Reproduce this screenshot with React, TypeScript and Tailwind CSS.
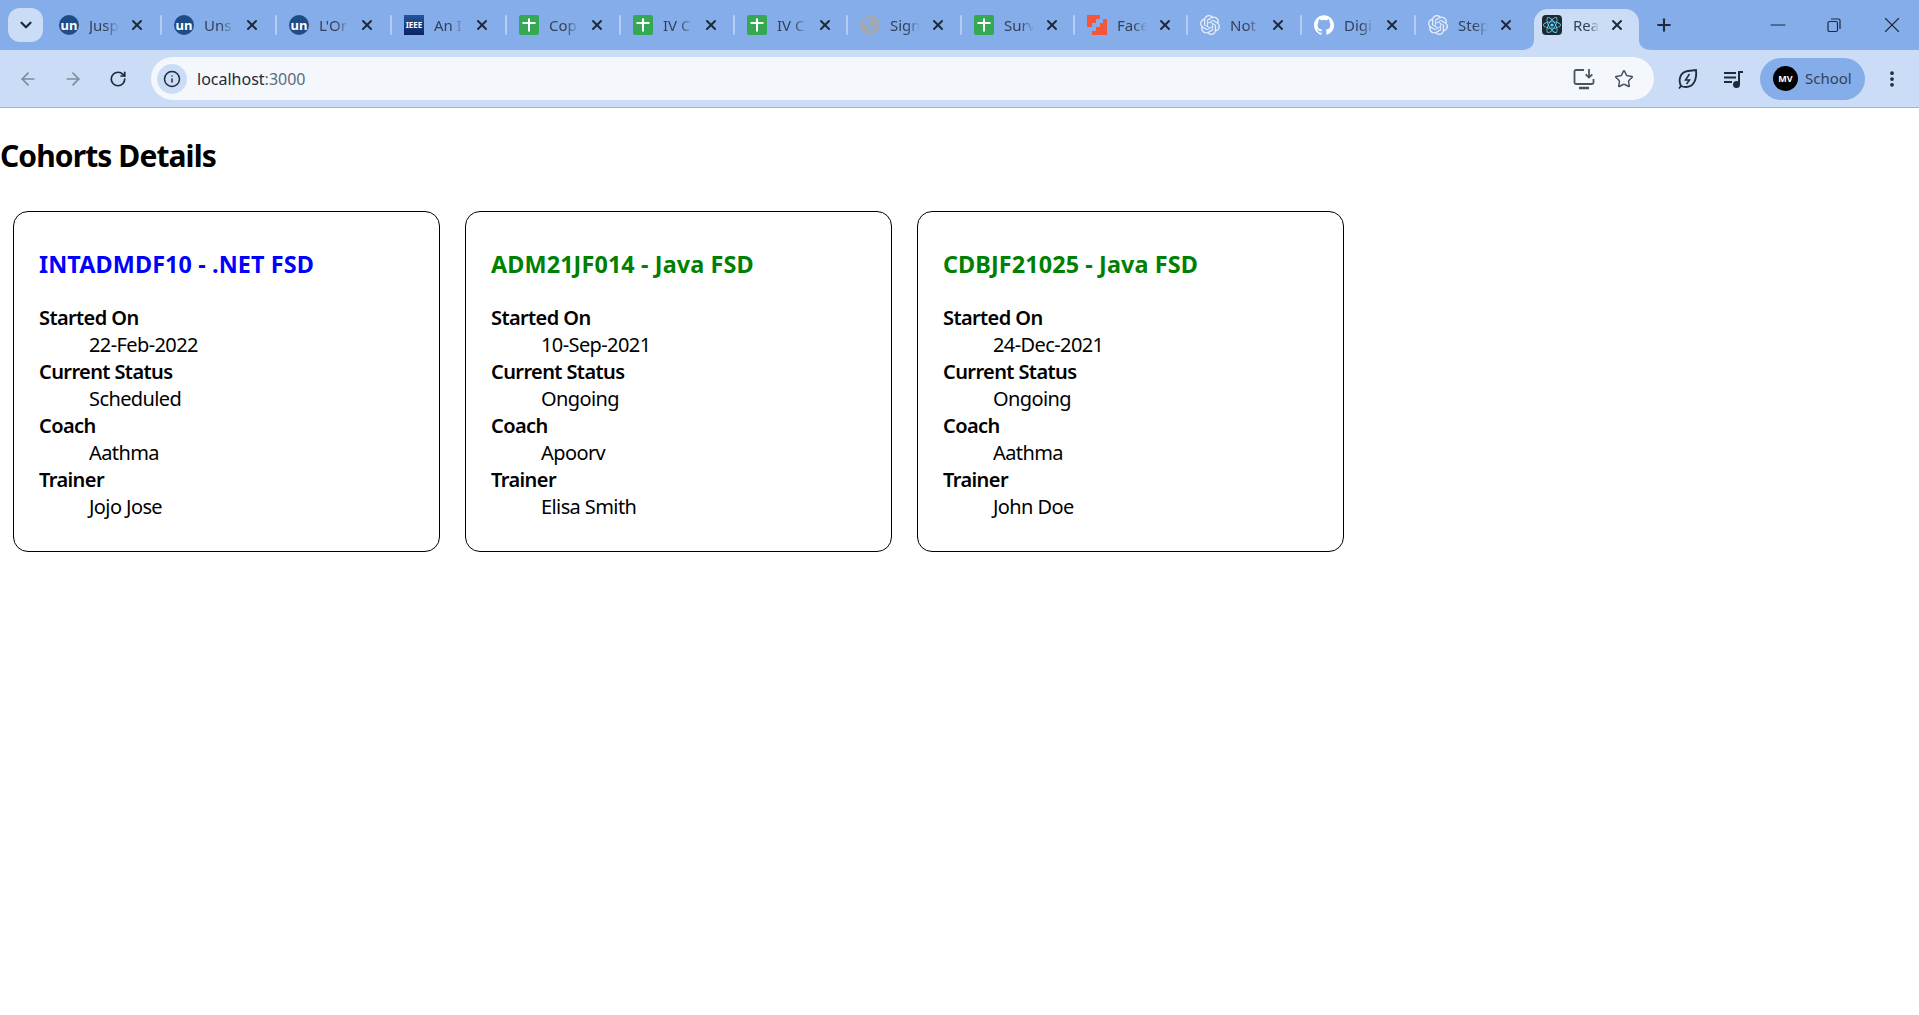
import { SiOpenai, SiGithub } from "react-icons/si";
import { FaGlobeAmericas, FaReact } from "react-icons/fa";
import {
  ArrowLeft,
  ArrowRight,
  ChevronDown,
  Info,
  Minus,
  MoreVertical,
  Plus,
  RotateCw,
  Star,
  X,
} from "lucide-react";
import type { ReactNode } from "react";

const UI_FONT = "font-['Noto_Sans','Open_Sans',sans-serif]";

function UnIcon() {
  return (
    <span className="flex h-5 w-5 items-center justify-center rounded-full bg-[#1d4c86] text-[13px] font-bold leading-none text-white">
      un
    </span>
  );
}

function SheetIcon() {
  return (
    <svg viewBox="0 0 20 20" className="h-5 w-5">
      <rect width="20" height="20" rx="2" fill="#34a853" />
      <path d="M3.5 8h13M10 3.5v13" stroke="#fff" strokeWidth="2" />
    </svg>
  );
}

function IeeeIcon() {
  return (
    <span className="flex h-5 w-5 items-center justify-center bg-gradient-to-b from-[#24569b] to-[#0b2260] text-[8px] font-bold leading-none text-white">
      IEEE
    </span>
  );
}

function StairsIcon() {
  return (
    <svg viewBox="0 0 20 20" className="h-5 w-5">
      <path d="M0 0h13v4H9v4H5v4H0z" fill="#f4553b" />
      <path d="M20 4v16H5v-4h4v-4h4V8h3V4z" fill="#f4553b" />
    </svg>
  );
}

type Tab = { title: string; icon: ReactNode; width: string };

// tab widths are not quite even in the reference
const TABS: Tab[] = [
  { title: "Jusp", icon: <UnIcon />, width: "w-[115px]" },
  { title: "Uns", icon: <UnIcon />, width: "w-[115px]" },
  { title: "L'Or", icon: <UnIcon />, width: "w-[115px]" },
  { title: "An I", icon: <IeeeIcon />, width: "w-[115px]" },
  { title: "Cop", icon: <SheetIcon />, width: "w-[114px]" },
  { title: "IV C", icon: <SheetIcon />, width: "w-[114px]" },
  { title: "IV C", icon: <SheetIcon />, width: "w-[113px]" },
  { title: "Sign", icon: <FaGlobeAmericas size={20} className="text-[#a3a8af]" />, width: "w-[114px]" },
  { title: "Surv", icon: <SheetIcon />, width: "w-[113px]" },
  { title: "Face", icon: <StairsIcon />, width: "w-[113px]" },
  { title: "Not", icon: <SiOpenai size={20} className="text-[#e8eef8]" />, width: "w-[114px]" },
  { title: "Digi", icon: <SiGithub size={20} className="text-white" />, width: "w-[114px]" },
  { title: "Step", icon: <SiOpenai size={20} className="text-[#e8eef8]" />, width: "w-[113px]" },
];

const COHORTS = [
  { code: "INTADMDF10 - .NET FSD", started: "22-Feb-2022", status: "Scheduled", coach: "Aathma", trainer: "Jojo Jose" },
  { code: "ADM21JF014 - Java FSD", started: "10-Sep-2021", status: "Ongoing", coach: "Apoorv", trainer: "Elisa Smith" },
  { code: "CDBJF21025 - Java FSD", started: "24-Dec-2021", status: "Ongoing", coach: "Aathma", trainer: "John Doe" },
];

function BrowserTab({ tab, last }: { tab: Tab; last: boolean }) {
  return (
    <div className={`flex h-full shrink-0 items-center pl-[12px] ${tab.width}`}>
      <span className="flex w-5 shrink-0 justify-center">{tab.icon}</span>
      <span className="ml-[10px] w-[30px] overflow-hidden whitespace-nowrap text-[15px] text-[#33415a] [mask-image:linear-gradient(to_right,#000_55%,transparent)]">
        {tab.title}
      </span>
      <X size={16} strokeWidth={3} className="ml-[10px] shrink-0 text-[#1f2a3a]" />
      {!last && <span className="ml-auto h-[20px] w-[2px] shrink-0 rounded bg-[#b5cdf0]" />}
    </div>
  );
}

function Browser() {
  return (
    <header className={UI_FONT}>
      <div className="flex h-[50px] items-end bg-[#85ade9]">
        <div className="flex h-full w-[47px] shrink-0 items-start pl-2 pt-2">
          <div className="flex h-[34px] w-[35px] items-center justify-center rounded-xl bg-[#cbddf6]">
            <ChevronDown size={18} strokeWidth={3} className="text-[#1f2a3a]" />
          </div>
        </div>
        <div className="mt-2 flex h-[34px] self-start">
          {TABS.map((tab, i) => (
            <BrowserTab key={i} tab={tab} last={i === TABS.length - 1} />
          ))}
        </div>
        <div className="relative ml-[5px] flex h-[41px] w-[105px] shrink-0 items-center rounded-t-[14px] bg-[#cbddf6] pb-[9px] pl-[8px] pr-[14px]">
          <svg viewBox="0 0 13 10" className="absolute bottom-0 left-[-13px] h-[10px] w-[13px]">
            <path d="M13 0v10H0c7 0 13-3 13-10Z" fill="#cbddf6" />
          </svg>
          <svg viewBox="0 0 13 10" className="absolute bottom-0 right-[-13px] h-[10px] w-[13px]">
            <path d="M0 0v10h13C6 10 0 7 0 0Z" fill="#cbddf6" />
          </svg>
          <span className="flex h-5 w-5 shrink-0 items-center justify-center rounded-sm bg-[#1f2a30]">
            <FaReact size={18} className="text-[#61dafb]" />
          </span>
          <span className="ml-[11px] w-[26px] overflow-hidden whitespace-nowrap text-[15px] text-[#33415a] [mask-image:linear-gradient(to_right,#000_60%,transparent)]">
            React
          </span>
          <X size={16} strokeWidth={3} className="ml-auto text-[#1f2a3a]" />
        </div>
        <div className="flex h-[41px] w-[50px] items-center justify-center pb-[9px]">
          <Plus size={20} strokeWidth={2.5} className="text-[#1f2a3a]" />
        </div>
        <div className="ml-auto flex h-full items-center pr-[14px] text-[#1f2a3a]">
          <Minus size={24} strokeWidth={1.1} className="mr-[36px]" />
          <svg viewBox="0 0 16 16" className="mr-[37px] h-4 w-4" fill="none" stroke="currentColor" strokeWidth="1.2">
            <rect x="2" y="4.5" width="9.5" height="10" rx="1.5" />
            <path d="M5 2h7.5A1.5 1.5 0 0 1 14 3.5V12" />
          </svg>
          <X size={26} strokeWidth={1} />
        </div>
      </div>
      <div className="flex h-[58px] items-center border-b border-[#a0b2cf] bg-[#cbddf6] pr-[17px]">
        <ArrowLeft size={20} className="ml-[18px] text-[#7f8b9c]" />
        <ArrowRight size={20} className="ml-[25px] text-[#7f8b9c]" />
        <RotateCw size={18} strokeWidth={2.25} className="ml-[26px] text-[#1f2a3a]" />
        <div className="ml-[24px] flex h-[43px] flex-1 items-center rounded-full bg-[#f4f7fc] pl-[6px] pr-[20px]">
          <span className="flex h-[30px] w-[30px] items-center justify-center rounded-full bg-[#cbddf6]">
            <Info size={18} className="text-[#1f2a3a]" />
          </span>
          <span className="ml-[10px] text-[16px] text-[#1f2a3a]">
            localhost<span className="text-[#5e6a7c]">:3000</span>
          </span>
          <svg viewBox="0 0 22 22" className="ml-auto h-[22px] w-[22px] text-[#4a5361]" fill="none" stroke="currentColor" strokeWidth="1.8">
            <path d="M11 2H3a1.5 1.5 0 0 0-1.5 1.5v11A1.5 1.5 0 0 0 3 16h16a1.5 1.5 0 0 0 1.5-1.5V11" />
            <path d="M6 20h10" strokeWidth="2.5" />
            <path d="M16 1v8M12.7 6.3 16 9.6l3.3-3.3" />
          </svg>
          <Star size={20} strokeWidth={1.75} className="ml-[19px] text-[#4a5361]" />
        </div>
        <svg viewBox="0 0 22 22" className="ml-[23px] h-[22px] w-[22px] text-[#1f2a3a]" fill="none" stroke="currentColor" strokeWidth="1.8">
          <path d="M4 18C1 12 3 4 11 3l8-1c1 9-2 17-10 17-2 0-4-.5-5-1Zm0 0-2 2.5" />
          <path d="m12.5 6-4 6h4l-3 4" strokeWidth="1.5" />
        </svg>
        <svg viewBox="0 0 22 22" className="ml-[24px] h-[22px] w-[22px] text-[#1f2a3a]" fill="none" stroke="currentColor" strokeWidth="2">
          <path d="M1 5h12M1 9.5h12M1 14h8" />
          <path d="M16 16V4h4" />
          <circle cx="13.5" cy="16.5" r="2.5" fill="currentColor" />
        </svg>
        <div className="ml-[15px] flex h-[42px] w-[105px] items-center rounded-full bg-[#85ade9] pl-[13px]">
          <span className="flex h-[25px] w-[25px] items-center justify-center rounded-full bg-black text-[9px] font-bold text-white">
            MV
          </span>
          <span className="ml-[7px] text-[15px] text-[#33415a]">School</span>
        </div>
        <MoreVertical size={20} strokeWidth={2.5} className="ml-[17px] text-[#1f2a3a]" />
      </div>
    </header>
  );
}

function Cohort({ code, started, status, coach, trainer }: (typeof COHORTS)[number]) {
  const color = status === "Scheduled" ? "text-[#0000ff]" : "text-[#008000]";
  const rows = [
    ["Started On", started],
    ["Current Status", status],
    ["Coach", coach],
    ["Trainer", trainer],
  ];
  return (
    <div className="h-[341px] w-[427px] shrink-0 rounded-[15px] border border-black pl-[25px] pr-[25px] pt-[25px]">
      <h3 className={`mt-[12px] text-[23.4px] font-bold leading-[30px] tracking-[0.1px] ${color}`}>{code}</h3>
      <dl className="mt-[25px] text-[20px] leading-[27px] tracking-[-0.6px]">
        {rows.map(([label, value]) => (
          <div key={label}>
            <dt className="font-semibold">{label}</dt>
            <dd className="ml-[50px]">{value}</dd>
          </div>
        ))}
      </dl>
    </div>
  );
}

export default function App() {
  return (
    <div className="min-h-[1015px] bg-white text-black">
      <Browser />
      <main className={UI_FONT}>
        <h1 className="mt-[28px] text-[30px] font-bold leading-[40px] tracking-[-0.9px]">Cohorts Details</h1>
        <div className="ml-[13px] mt-[35px] flex gap-[25px]">
          {COHORTS.map((c) => (
            <Cohort key={c.code} {...c} />
          ))}
        </div>
      </main>
    </div>
  );
}
